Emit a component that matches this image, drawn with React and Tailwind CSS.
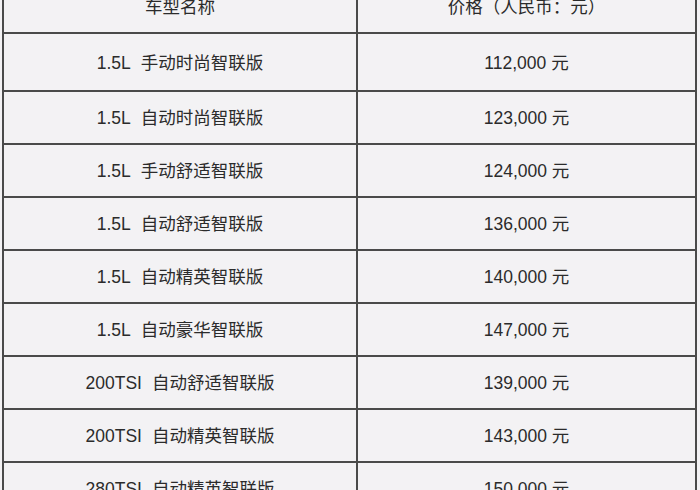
const rows = [
  ['1.5L', '手动时尚智联版', '112,000 元'],
  ['1.5L', '自动时尚智联版', '123,000 元'],
  ['1.5L', '手动舒适智联版', '124,000 元'],
  ['1.5L', '自动舒适智联版', '136,000 元'],
  ['1.5L', '自动精英智联版', '140,000 元'],
  ['1.5L', '自动豪华智联版', '147,000 元'],
  ['200TSI', '自动舒适智联版', '139,000 元'],
  ['200TSI', '自动精英智联版', '143,000 元'],
  ['280TSI', '自动精英智联版', '150,000 元'],
]

export default function App() {
  return (
    <div className="h-[490px] w-[700px] overflow-hidden bg-[#f3f2f4] font-['Liberation_Sans','Noto_Sans_CJK_SC',sans-serif] text-[17.5px] text-[#2b2b2b]">
      <div className="-mt-[20px] ml-[2px] w-[695px] border-x-2 border-[#4a4a4a]">
        <div className="grid h-[54px] grid-cols-[354px_1fr] border-b-2 border-[#4a4a4a]">
          <div className="flex items-center justify-center border-r-2 border-[#4a4a4a] pt-[2px]">车型名称</div>
          <div className="flex items-center justify-center pt-[2px]">价格（人民币：元）</div>
        </div>
        {rows.map(([engine, trim, price], i) => (
          <div
            key={engine + trim}
            className={`grid grid-cols-[354px_1fr] border-b-2 border-[#4a4a4a] ${i === 0 ? 'h-[58px]' : 'h-[53px]'}`}
          >
            <div className="flex items-center justify-center border-r-2 border-[#4a4a4a] pt-[2px]">
              <span>{engine}</span>
              <span className="ml-[10px]">{trim}</span>
            </div>
            <div className="flex items-center justify-center pt-[2px]">{price}</div>
          </div>
        ))}
      </div>
    </div>
  )
}
